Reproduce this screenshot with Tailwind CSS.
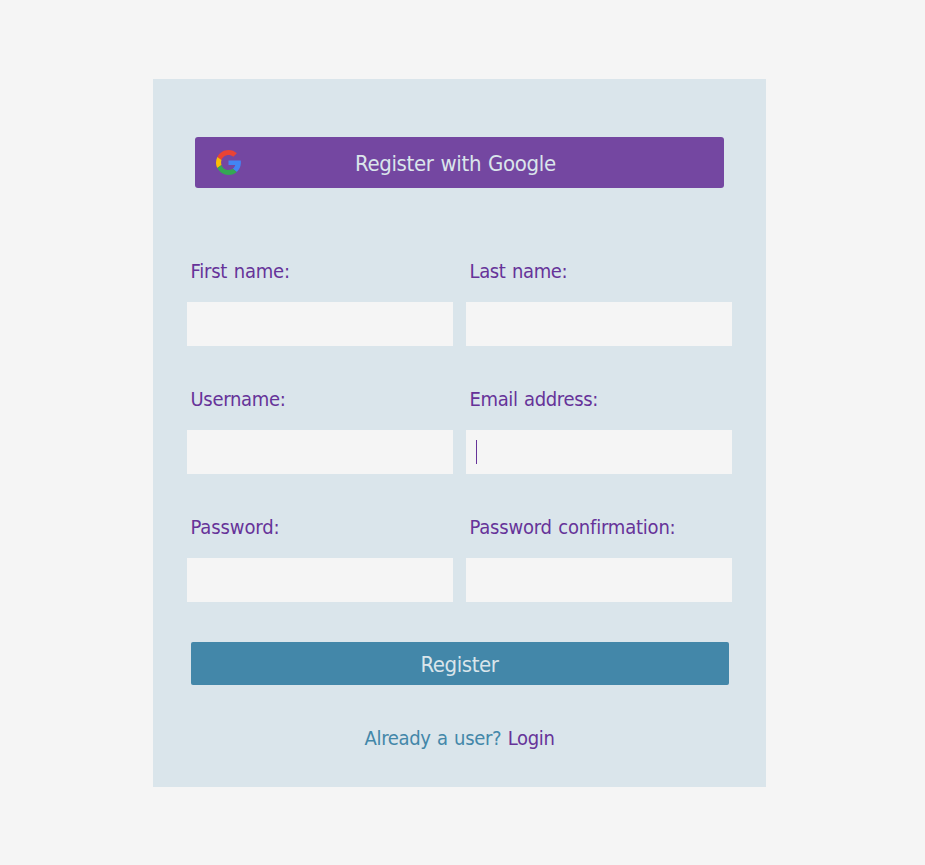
<!DOCTYPE html>
<html lang="en">
<head>
<meta charset="utf-8">
<title>Register</title>
<script src="https://cdn.jsdelivr.net/npm/@tailwindcss/browser@4"></script>
</head>
<body class="bg-[#f5f5f5] pt-[79px] pl-[153px] h-[865px] overflow-hidden font-['Tahoma','DejaVu_Sans_Condensed','DejaVu_Sans',sans-serif] [font-stretch:condensed]">
<main class="w-[613px] h-[708px] bg-[#dae5eb] pt-[58px] text-[20px] leading-6 text-[#663399]">
  <button class="ml-[42px] w-[529px] h-[51px] rounded-[3px] bg-[#7447a1] flex items-center pl-[21px] text-[22px] text-[#dae5eb]">
    <svg class="w-[25px] h-[25px] shrink-0" viewBox="0 0 48 48">
      <path fill="#EA4335" d="M24 9.5c3.54 0 6.71 1.22 9.21 3.6l6.85-6.85C35.9 2.38 30.47 0 24 0 14.62 0 6.51 5.38 2.56 13.22l7.98 6.19C12.43 13.72 17.74 9.5 24 9.5z"/>
      <path fill="#4285F4" d="M47.5 20H24v9.02h12.94c-.58 2.96-2.26 5.48-4.78 7.18l7.73 6c4.51-4.18 7.9-10.36 7.9-17.65 0-1.57-.1-3.09-.29-4.55z"/>
      <path fill="#FBBC05" d="M10.53 28.59c-.48-1.45-.76-2.99-.76-4.59s.27-3.14.76-4.59l-7.98-6.19C.92 16.46 0 20.12 0 24s.92 7.54 2.56 10.78l7.97-6.19z"/>
      <path fill="#34A853" d="M24 48c6.48 0 11.93-2.13 15.89-5.81l-7.73-6c-2.15 1.45-4.92 2.3-8.16 2.3-6.26 0-11.57-4.22-13.47-9.91l-7.98 6.19C6.51 42.62 14.62 48 24 48z"/>
    </svg>
    <span class="ml-[114px] pt-[2px] whitespace-nowrap tracking-[-0.35px] [word-spacing:1px]">Register with Google</span>
  </button>
  <form class="mt-[71px] ml-[34px] grid grid-cols-[266px_266px] gap-x-[13px] gap-y-[40px]">
    <label class="block h-[88px]"><span class="block h-[43px] pl-[3.5px] whitespace-nowrap tracking-[-0.2px] [word-spacing:1px]">First name:</span><span class="block h-11 bg-[#f5f5f5]"></span></label>
    <label class="block h-[88px]"><span class="block h-[43px] pl-[3.5px] whitespace-nowrap tracking-[-0.35px] [word-spacing:1px]">Last name:</span><span class="block h-11 bg-[#f5f5f5]"></span></label>
    <label class="block h-[88px]"><span class="block h-[43px] pl-[3.5px] whitespace-nowrap tracking-[-0.3px]">Username:</span><span class="block h-11 bg-[#f5f5f5]"></span></label>
    <label class="block h-[88px]"><span class="block h-[43px] pl-[3.5px] whitespace-nowrap tracking-[-0.35px] [word-spacing:1px]">Email address:</span><span class="flex items-center h-11 bg-[#f5f5f5] pl-[10px]"><span class="w-px h-6 bg-[#663399]"></span></span></label>
    <label class="block h-[88px]"><span class="block h-[43px] pl-[3.5px] whitespace-nowrap tracking-[-0.1px]">Password:</span><span class="block h-11 bg-[#f5f5f5]"></span></label>
    <label class="block h-[88px]"><span class="block h-[43px] pl-[3.5px] whitespace-nowrap tracking-[-0.2px] [word-spacing:1px]">Password confirmation:</span><span class="block h-11 bg-[#f5f5f5]"></span></label>
  </form>
  <button class="block mt-[39px] ml-[38px] w-[538px] h-[43px] pt-[2px] pr-px rounded-[2px] bg-[#4387a9] text-center text-[22px] text-[#dae5eb] tracking-[-0.4px]">Register</button>
  <p class="mt-[41px] text-center text-[#4387a9] tracking-[-0.33px] [word-spacing:1px]">Already a user? <a class="text-[#663399]">Login</a></p>
</main>
</body>
</html>
